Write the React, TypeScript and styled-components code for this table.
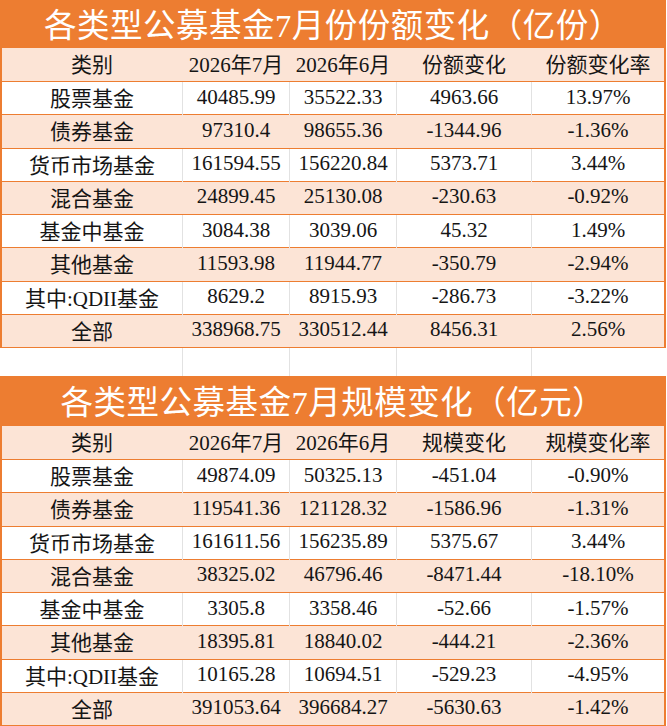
import React from "react";
import styled, { createGlobalStyle } from "styled-components";

const GlobalStyle = createGlobalStyle`
  html, body { margin: 0; padding: 0; background: #ffffff; }
  body { font-family: "Liberation Serif", "Noto Sans CJK SC", serif; }
`;

const ORANGE = "#ED7D31";
const PEACH = "#FCE4D6";
const GRID = "#E2E2E2";
const COLS = "180px 107px 107px 135px 1fr";

const Page = styled.div`
  width: 667px;
  display: flex;
  flex-direction: column;
`;

const Table = styled.section`
  width: 666px;
  box-sizing: border-box;
  border-left: 2px solid ${ORANGE};
  border-right: 2px solid ${ORANGE};
  display: flex;
  flex-direction: column;
`;

const Title = styled.div<{ $h: number }>`
  height: ${(p) => p.$h}px;
  background: ${ORANGE};
  color: #ffffff;
  font-size: 32.5px;
  display: flex;
  align-items: center;
  justify-content: center;
  letter-spacing: 0.5px;
  padding-bottom: 3px;
  box-sizing: border-box;
`;

const Row = styled.div<{ $shade: boolean; $h: number }>`
  display: grid;
  grid-template-columns: ${COLS};
  height: ${(p) => p.$h}px;
  box-sizing: border-box;
  background: ${(p) => (p.$shade ? PEACH : "#ffffff")};
  border-bottom: 1px solid ${ORANGE};
`;

const Cell = styled.div<{ $line: boolean }>`
  display: flex;
  align-items: center;
  justify-content: center;
  font-size: 21px;
  color: #151515;
  white-space: nowrap;
  padding-bottom: 3px;
  box-sizing: border-box;
  border-left: 1px solid ${(p) => (p.$line ? GRID : "transparent")};
  &:first-child { border-left: none; }
`;

const Spacer = styled.div`
  display: grid;
  grid-template-columns: ${COLS};
  width: 666px;
  height: 28px;
  padding-left: 2px;
  box-sizing: border-box;
  background: #ffffff;
`;

const SpacerCell = styled.div`
  border-left: 1px solid ${GRID};
  &:first-child { border-left: none; }
`;

type Data = string[][];

const share: Data = [
  ["股票基金", "40485.99", "35522.33", "4963.66", "13.97%"],
  ["债券基金", "97310.4", "98655.36", "-1344.96", "-1.36%"],
  ["货币市场基金", "161594.55", "156220.84", "5373.71", "3.44%"],
  ["混合基金", "24899.45", "25130.08", "-230.63", "-0.92%"],
  ["基金中基金", "3084.38", "3039.06", "45.32", "1.49%"],
  ["其他基金", "11593.98", "11944.77", "-350.79", "-2.94%"],
  ["其中:QDII基金", "8629.2", "8915.93", "-286.73", "-3.22%"],
  ["全部", "338968.75", "330512.44", "8456.31", "2.56%"],
];

const scale: Data = [
  ["股票基金", "49874.09", "50325.13", "-451.04", "-0.90%"],
  ["债券基金", "119541.36", "121128.32", "-1586.96", "-1.31%"],
  ["货币市场基金", "161611.56", "156235.89", "5375.67", "3.44%"],
  ["混合基金", "38325.02", "46796.46", "-8471.44", "-18.10%"],
  ["基金中基金", "3305.8", "3358.46", "-52.66", "-1.57%"],
  ["其他基金", "18395.81", "18840.02", "-444.21", "-2.36%"],
  ["其中:QDII基金", "10165.28", "10694.51", "-529.23", "-4.95%"],
  ["全部", "391053.64", "396684.27", "-5630.63", "-1.42%"],
];

function FundTable({ title, titleH, head, rows }: { title: string; titleH: number; head: string[]; rows: Data }) {
  return (
    <Table>
      <Title $h={titleH}>{title}</Title>
      <Row $shade={true} $h={34}>
        {head.map((h, i) => (
          <Cell key={i} $line={false}>{h}</Cell>
        ))}
      </Row>
      {rows.map((r, ri) => {
        const shade = ri % 2 === 1;
        return (
          <Row key={ri} $shade={shade} $h={33.25}>
            {r.map((c, ci) => (
              <Cell key={ci} $line={!shade}>{c}</Cell>
            ))}
          </Row>
        );
      })}
    </Table>
  );
}

export default function App() {
  return (
    <>
      <GlobalStyle />
      <Page>
        <FundTable
          title="各类型公募基金7月份份额变化（亿份）"
          titleH={48}
          head={["类别", "2026年7月", "2026年6月", "份额变化", "份额变化率"]}
          rows={share}
        />
        <Spacer>
          <SpacerCell />
          <SpacerCell />
          <SpacerCell />
          <SpacerCell />
          <SpacerCell />
        </Spacer>
        <FundTable
          title="各类型公募基金7月规模变化（亿元）"
          titleH={50}
          head={["类别", "2026年7月", "2026年6月", "规模变化", "规模变化率"]}
          rows={scale}
        />
      </Page>
    </>
  );
}
